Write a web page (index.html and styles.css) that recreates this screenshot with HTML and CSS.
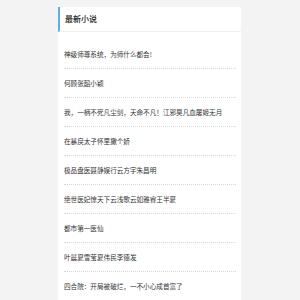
FILE: index.html
```html
<!DOCTYPE html>
<html>
<head>
<meta charset="utf-8">
<link rel="stylesheet" href="styles.css">
</head>
<body>
<div class="panel">
  <div class="panel-head">最新小说</div>
  <ul class="list">
    <li>神级师尊系统，为师什么都会!</li>
    <li>何顾张韶小颖</li>
    <li>我，一柄不死凡尘剑，天命不凡！江邪昊凡血屠姬无月</li>
    <li>在暴戾太子怀里撒个娇</li>
    <li>极品盘医聂静娱行云方宇朱昌明</li>
    <li>绝世医妃惊天下云浅歌云如雅睿王半夏</li>
    <li>都市第一医仙</li>
    <li>叶晨夏雪莹夏伟民李德发</li>
    <li>四合院：开局被破烂，一不小心成首富了</li>
  </ul>
</div>
</body>
</html>
```

FILE: styles.css
```css
html, body {
  margin: 0;
  padding: 0;
  background: #f3f3f3;
  font-family: "Noto Sans CJK SC", "Noto Sans", sans-serif;
}
.panel {
  margin: 7px 0 0 58px;
  width: 183px;
  background: #fff;
  min-height: 300px;
}
.panel-head {
  height: 24px;
  line-height: 24px;
  border-left: 2px solid #5ab4e0;
  border-bottom: 1px solid #f0f0f0;
  padding-left: 5px;
  font-size: 8px;
  color: #222;
  font-weight: 500;
}
.list {
  list-style: none;
  margin: 0 5px 0 6px;
  padding: 8px 0 0 0;
}
.list li {
  height: 28px;
  line-height: 28px;
  border-bottom: 1px dotted #d8d8d8;
  font-size: 6.6px;
  color: #333;
  white-space: nowrap;
  overflow: hidden;
}
```
